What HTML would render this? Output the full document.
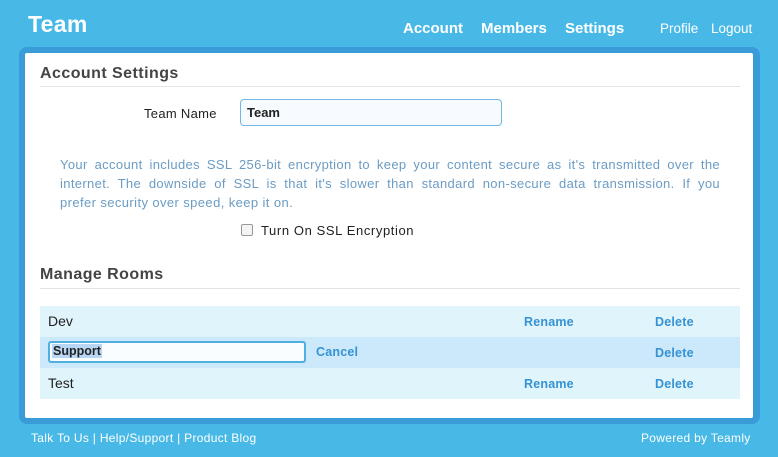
<!DOCTYPE html>
<html><head><meta charset="utf-8"><style>
*{margin:0;padding:0;box-sizing:border-box}
body{width:778px;height:457px;background:#48b9e7;font-family:"Liberation Sans",sans-serif;position:relative;overflow:hidden}
.a{position:absolute;white-space:nowrap}
.logo{left:28px;top:11px;font-size:23px;font-weight:bold;color:#fff;letter-spacing:0.3px}
.nav{top:20px;font-size:15px;font-weight:bold;color:#fff}
.nav2{top:21px;font-size:13.5px;color:#fff}
.panel{left:19px;top:47px;width:741px;height:377px;background:#3a9bd9;border-radius:8px}
.inner{left:25px;top:53px;width:728px;height:365px;background:#fff;border-radius:2px}
.h{font-size:16px;color:#444;font-weight:bold;letter-spacing:0.45px}
.hr{left:40px;height:1px;width:700px;background:#e4e4e4}
.lbl{font-size:13px;color:#222;letter-spacing:0.6px}
.p{left:60px;top:155px;width:660px;font-size:13px;line-height:19px;color:#6b9cc4;white-space:nowrap}
.p div{text-align:justify;text-align-last:justify;letter-spacing:0.35px}
.p div.l{text-align-last:left;letter-spacing:0.4px}
.row{left:40px;width:700px;height:31px;background:#e0f4fc}
.rt{font-size:14px;color:#222}
.lk{font-size:12.5px;font-weight:bold;color:#3592d3;letter-spacing:0.2px}
.f{top:431px;font-size:12px;color:#fff;letter-spacing:0.3px}
</style></head><body>
<div class="a logo">Team</div>
<div class="a nav" style="left:403px">Account</div>
<div class="a nav" style="left:481px">Members</div>
<div class="a nav" style="left:565px">Settings</div>
<div class="a nav2" style="left:660px">Profile</div>
<div class="a nav2" style="left:711px">Logout</div>
<div class="a panel"></div>
<div class="a inner"></div>
<div class="a h" style="left:40px;top:65px">Account Settings</div>
<div class="a hr" style="top:86px"></div>
<div class="a lbl" style="left:144px;top:106px;letter-spacing:0.3px">Team Name</div>
<div class="a" style="left:240px;top:99px;width:262px;height:27px;border:1px solid #6fb8e2;border-radius:4px;background:#f7fbff;font-size:13px;font-weight:bold;color:#222;padding:5px 0 0 6px">Team</div>
<div class="a p">
<div>Your account includes SSL 256-bit encryption to keep your content secure as it's transmitted over the</div>
<div>internet. The downside of SSL is that it's slower than standard non-secure data transmission. If you</div>
<div class="l">prefer security over speed, keep it on.</div>
</div>
<div class="a" style="left:241px;top:224px;width:12px;height:12px;border:1px solid #999;border-radius:2px;background:#f4f4f4"></div>
<div class="a lbl" style="left:261px;top:223px">Turn On SSL Encryption</div>
<div class="a h" style="left:40px;top:266px">Manage Rooms</div>
<div class="a hr" style="top:288px"></div>
<div class="a row" style="top:306px"></div>
<div class="a row" style="top:337px;background:#cce9fb"></div>
<div class="a row" style="top:368px"></div>
<div class="a rt" style="left:48px;top:313px">Dev</div>
<div class="a" style="left:48px;top:341px;width:258px;height:22px;border:2px solid #4fb0e0;border-radius:3px;background:#fafdff"></div>
<div class="a" style="left:52px;top:344px;background:#b9d7f5;font-size:12.5px;font-weight:bold;color:#222;padding:0 1px">Support</div>
<div class="a lk" style="left:316px;top:345px">Cancel</div>
<div class="a rt" style="left:48px;top:375px">Test</div>
<div class="a lk" style="left:524px;top:315px">Rename</div>
<div class="a lk" style="left:655px;top:315px">Delete</div>
<div class="a lk" style="left:655px;top:346px">Delete</div>
<div class="a lk" style="left:524px;top:377px">Rename</div>
<div class="a lk" style="left:655px;top:377px">Delete</div>
<div class="a f" style="left:31px">Talk To Us | Help/Support | Product Blog</div>
<div class="a f" style="left:641px">Powered by Teamly</div>
</body></html>
